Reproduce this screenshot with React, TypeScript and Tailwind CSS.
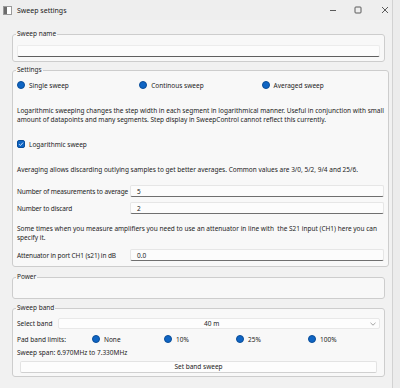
import React from "react";

const font = { fontFamily: '"Noto Sans", "Open Sans", sans-serif' };

function Radio({ label }: { label: string }) {
  return (
    <div className="flex items-center h-[10px] whitespace-nowrap">
      <span className="w-[8px] h-[8px] rounded-full bg-[#0f65c4] border border-[#0a4d98] shrink-0" />
      <span className="ml-[4px] leading-[9px]">{label}</span>
    </div>
  );
}

function Field({ label, value }: { label: string; value: string }) {
  return (
    <div className="flex items-center h-[12px]">
      <div className="w-[113px] shrink-0 leading-[9px] whitespace-nowrap tracking-[-0.12px]">{label}</div>
      <div className="flex-1 h-[12px] bg-[#fcfcfc] border border-[#e6e6e6] border-b-[#6f6f6f] rounded-[2px] flex items-center pl-[6px] leading-[9px]">
        {value}
      </div>
    </div>
  );
}

function Group({ title, children, className }: { title: string; children?: React.ReactNode; className?: string }) {
  return (
    <fieldset className={"border border-[#cdcdcd] rounded-[3px] bg-[#f8f8f8] px-[4px] " + (className ?? "")}>
      <legend className="ml-[-1px] px-[1px] leading-[8px] text-[6.5px] text-[#1f1f1f]">{title}</legend>
      {children}
    </fieldset>
  );
}

export default function App() {
  return (
    <div className="w-[400px] h-[388px] overflow-hidden flex bg-[#ececec] text-[#1c1c1c] text-[6.5px]" style={font}>
      <div className="w-[393px] h-[388px] shrink-0 flex flex-col bg-[#f1f1f1] border-r border-[#d2d2d2]">
        {/* title bar */}
        <div className="h-[20px] shrink-0 flex items-center bg-[#eeeeee]">
          <svg width="9" height="9" viewBox="0 0 9 9" className="ml-[3px]">
            <rect x="0.5" y="0.5" width="8" height="8" fill="#ffffff" stroke="#9a9a9a" />
            <rect x="1" y="1" width="3" height="7" fill="#6b6b6b" />
          </svg>
          <span className="ml-[5px] text-[7px] leading-[9px] text-[#1a1a1a]">Sweep settings</span>
          <div className="flex-1" />
          <svg width="8" height="8" viewBox="0 0 8 8" className="mr-[17px]">
            <line x1="1" y1="4.5" x2="7" y2="4.5" stroke="#333" strokeWidth="0.8" />
          </svg>
          <svg width="8" height="8" viewBox="0 0 8 8" className="mr-[19px]">
            <rect x="1" y="1" width="6" height="6" rx="0.8" fill="none" stroke="#333" strokeWidth="0.8" />
          </svg>
          <svg width="8" height="8" viewBox="0 0 8 8" className="mr-[3px]">
            <path d="M1 1 L7 7 M7 1 L1 7" stroke="#333" strokeWidth="0.8" />
          </svg>
        </div>

        {/* body */}
        <div className="flex flex-col pl-[12px] pr-[7px] pt-[10px]">
          <Group title="Sweep name" className="pb-[4px]">
            <div className="mt-[7px] h-[12px] bg-[#fcfcfc] border border-[#ececec] border-b-[#5f5f5f] rounded-[2px]" />
          </Group>

          <Group title="Settings" className="mt-[4px] pb-[5px]">
            <div className="mt-[6px] grid grid-cols-3">
              <Radio label="Single sweep" />
              <Radio label="Continous sweep" />
              <Radio label="Averaged sweep" />
            </div>
            <div className="mt-[15.5px] leading-[9px] whitespace-nowrap">
              <div>Logarithmic sweeping changes the step width in each segment in logarithmical manner. Useful in conjunction with small</div>
              <div>amount of datapoints and many segments. Step display in SweepControl cannot reflect this currently.</div>
            </div>
            <div className="mt-[15.5px] flex items-center h-[10px]">
              <span className="w-[8px] h-[8px] rounded-[2px] bg-[#0f65c4] border border-[#0a4d98] flex items-center justify-center shrink-0">
                <svg width="6" height="6" viewBox="0 0 6 6">
                  <path d="M1 3.1 L2.4 4.5 L5 1.6" fill="none" stroke="#fff" strokeWidth="0.8" />
                </svg>
              </span>
              <span className="ml-[4px] leading-[9px]">Logarithmic sweep</span>
            </div>
            <div className="mt-[15.5px] leading-[9px] whitespace-nowrap">
              Averaging allows discarding outlying samples to get better averages. Common values are 3/0, 5/2, 9/4 and 25/6.
            </div>
            <div className="mt-[11.5px]">
              <Field label="Number of measurements to average" value="5" />
            </div>
            <div className="mt-[5px]">
              <Field label="Number to discard" value="2" />
            </div>
            <div className="mt-[9.5px] leading-[9px] whitespace-nowrap">
              <div>Some times when you measure amplifiers you need to use an attenuator in line with &nbsp;the S21 input (CH1) here you can</div>
              <div>specify it.</div>
            </div>
            <div className="mt-[7.5px]">
              <Field label="Attenuator in port CH1 (s21) in dB" value="0.0" />
            </div>
          </Group>

          <Group title="Power" className="mt-[6px]">
            <div className="h-[17px]" />
          </Group>

          <Group title="Sweep band" className="mt-[5px] pb-[3px]">
            <div className="mt-[6px] flex items-center h-[11px]">
              <div className="w-[41px] shrink-0 leading-[9px] whitespace-nowrap">Select band</div>
              <div className="flex-1 h-[11px] bg-[#fdfdfd] border border-[#e8e8e8] rounded-[2px] flex items-center leading-[9px]">
                <span className="ml-[145px]">40 m</span>
                <div className="flex-1" />
                <svg width="6" height="4" viewBox="0 0 6 4" className="mr-[3px]">
                  <path d="M0.5 0.8 L3 3.2 L5.5 0.8" fill="none" stroke="#666" strokeWidth="0.6" />
                </svg>
              </div>
            </div>
            <div className="mt-[5px] grid grid-cols-[75px_repeat(4,1fr)] items-center">
              <div className="leading-[9px] whitespace-nowrap">Pad band limits:</div>
              <Radio label="None" />
              <Radio label="10%" />
              <Radio label="25%" />
              <Radio label="100%" />
            </div>
            <div className="mt-[3.5px] leading-[9px]">Sweep span: 6.970MHz to 7.330MHz</div>
            <div className="mt-[4px] mx-[3px] h-[12px] bg-[#fdfdfd] border border-[#e3e3e3] border-b-[#d0d0d0] rounded-[2px] flex items-center justify-center leading-[9px]">
              Set band sweep
            </div>
          </Group>
        </div>
      </div>
    </div>
  );
}
